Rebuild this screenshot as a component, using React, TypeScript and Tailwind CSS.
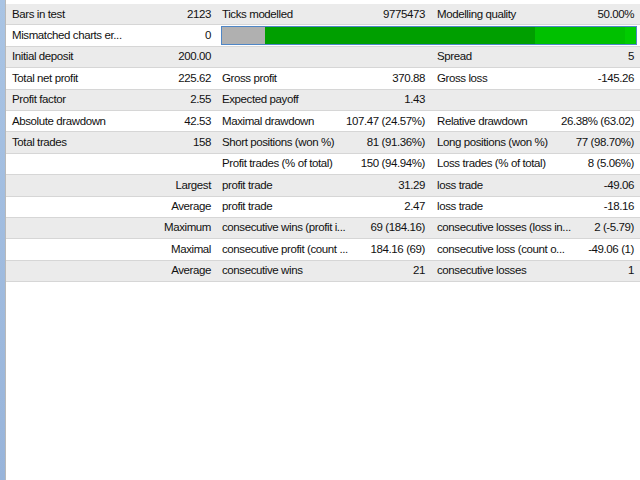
import React from "react";

type R = (string | null)[];
const rows: R[] = [
  ["Bars in test", "2123", "Ticks modelled", "9775473", "Modelling quality", "50.00%"],
  ["Mismatched charts er...", "0", null, null, null, null],
  ["Initial deposit", "200.00", "", "", "Spread", "5"],
  ["Total net profit", "225.62", "Gross profit", "370.88", "Gross loss", "-145.26"],
  ["Profit factor", "2.55", "Expected payoff", "1.43", "", ""],
  ["Absolute drawdown", "42.53", "Maximal drawdown", "107.47 (24.57%)", "Relative drawdown", "26.38% (63.02)"],
  ["Total trades", "158", "Short positions (won %)", "81 (91.36%)", "Long positions (won %)", "77 (98.70%)"],
  ["", "", "Profit trades (% of total)", "150 (94.94%)", "Loss trades (% of total)", "8 (5.06%)"],
  ["", "Largest", "profit trade", "31.29", "loss trade", "-49.06"],
  ["", "Average", "profit trade", "2.47", "loss trade", "-18.16"],
  ["", "Maximum", "consecutive wins (profit i...", "69 (184.16)", "consecutive losses (loss in...", "2 (-5.79)"],
  ["", "Maximal", "consecutive profit (count ...", "184.16 (69)", "consecutive loss (count o...", "-49.06 (1)"],
  ["", "Average", "consecutive wins", "21", "consecutive losses", "1"],
];

export default function App() {
  return (
    <div className="w-[640px] h-[480px] bg-white flex text-[11.5px] tracking-[-0.4px] text-[#111]" style={{ fontFamily: '"Liberation Sans", Arial, sans-serif' }}>
      <div className="w-[5px] bg-gradient-to-b from-[#a9c4e4] to-[#98b4da]" />
      <div className="w-px bg-[#b9b9b9]" />
      <div className="flex-1 pt-[4px]">
        {rows.map((r, i) => (
          <div key={i} className={`h-[21.4px] flex items-center border-b border-[#d6d6d6] ${i % 2 === 0 ? "bg-[#ebebeb]" : "bg-white"}`}>
            <div className="w-[209px] flex gap-2 pl-[6px] pr-[4px] whitespace-nowrap">
              <span className="flex-1">{r[0]}</span>
              <span>{r[1]}</span>
            </div>
            {r[2] === null ? (
              <div className="w-[416px] h-[19px] ml-[6px] border border-[#4f86c6] flex">
                <div className="w-[43px] bg-[#b0b0b0]" />
                <div className="w-[270px] bg-[#009f00]" />
                <div className="w-[90px] bg-[#00c000]" />
                <div className="flex-1 bg-[#00cc00]" />
              </div>
            ) : (
              <>
                <div className="w-[215px] flex gap-2 pl-[7px] pr-[5px] whitespace-nowrap">
                  <span className="flex-1">{r[2]}</span>
                  <span>{r[3]}</span>
                </div>
                <div className="flex-1 flex gap-2 pl-[7px] pr-[6px] whitespace-nowrap">
                  <span className="flex-1">{r[4]}</span>
                  <span>{r[5]}</span>
                </div>
              </>
            )}
          </div>
        ))}
      </div>
    </div>
  );
}
